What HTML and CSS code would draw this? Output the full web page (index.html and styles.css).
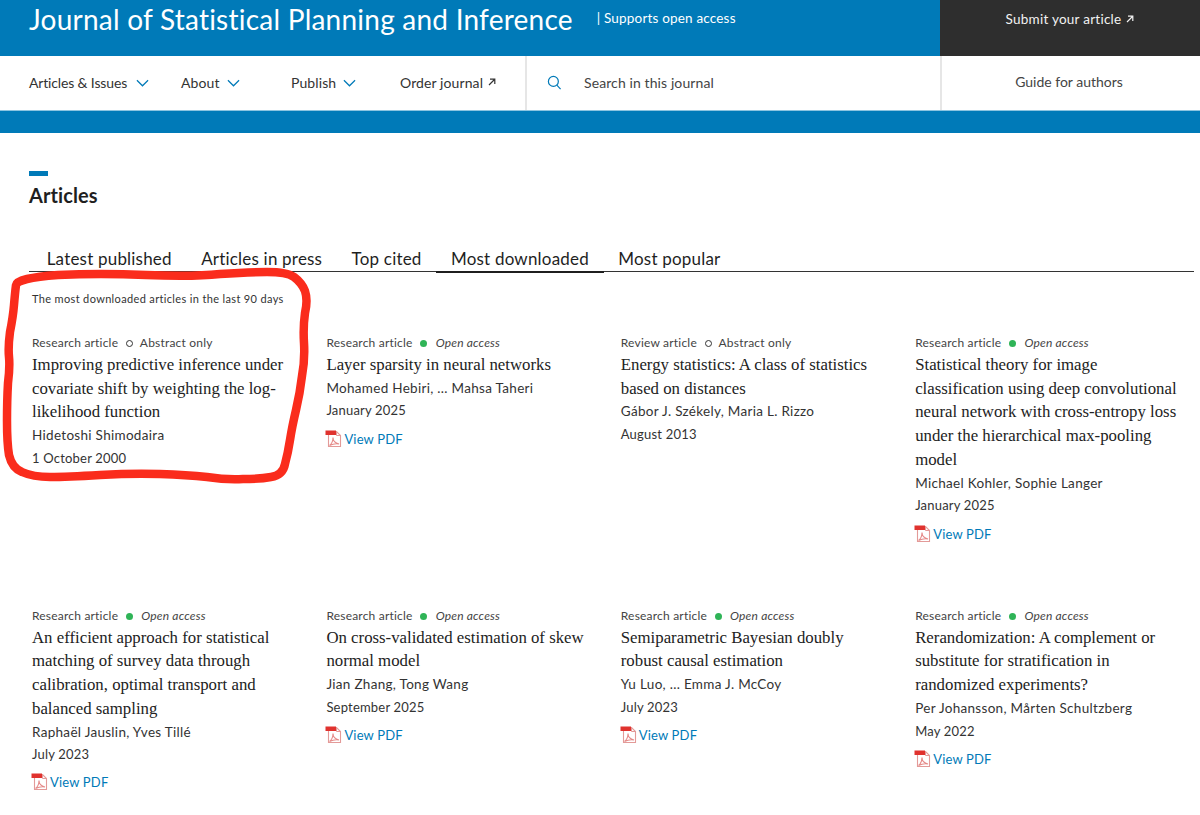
FILE: index.html
```html
<!DOCTYPE html>
<html lang="en">
<head>
<meta charset="utf-8">
<title>Journal of Statistical Planning and Inference</title>
<link rel="stylesheet" href="styles.css">
</head>
<body>
<svg width="0" height="0" class="defs">
  <defs>
    <symbol id="pdf" viewBox="0 0 18 18">
      <path d="M3.500 1.500h8l4 4v11h-12z" fill="#fff" stroke="#e39a98" stroke-width="1.100"/>
      <path d="M11.500 1.500v4h4" fill="none" stroke="#e39a98" stroke-width="1"/>
      <rect x="0.500" y="0.500" width="10.500" height="4.500" fill="#e0322e"/>
      <path d="M4.500 15.500c2-1.500 3.500-4.500 3.500-8 0 3 2 5.500 6 6.500-3-.5-6.500 0-9.500 1.500z" fill="none" stroke="#e58a88" stroke-width="1.100"/>
    </symbol>
    <symbol id="chev" viewBox="0 0 14 8">
      <path d="M1 1l6 6 6-6" fill="none" stroke="#007ab8" stroke-width="1.300"/>
    </symbol>
    <symbol id="ext" viewBox="0 0 8 8">
      <path d="M1 7l5.500-5.500M2 1.200h4.800v4.800" fill="none" stroke="currentColor" stroke-width="1.200"/>
    </symbol>
  </defs>
</svg>

<header class="topbar">
  <div class="brand">
    <h1 class="journal">Journal of Statistical Planning and Inference</h1>
    <span class="oa">| Supports open access</span>
  </div>
  <a class="submit">Submit your article <svg class="ext"><use href="#ext"/></svg></a>
</header>

<nav class="navbar">
  <div class="navlinks">
    <a class="navitem w1">Articles &amp; Issues <svg class="chev"><use href="#chev"/></svg></a>
    <a class="navitem w2">About <svg class="chev"><use href="#chev"/></svg></a>
    <a class="navitem w3">Publish <svg class="chev"><use href="#chev"/></svg></a>
    <a class="navitem">Order journal <svg class="ext"><use href="#ext"/></svg></a>
  </div>
  <div class="search">
    <svg class="searchicon" viewBox="0 0 16 16"><circle cx="6.800" cy="6.800" r="5.300" fill="none" stroke="#007ab8" stroke-width="1.300"/><path d="M10.500 10.800l4 4.200" fill="none" stroke="#007ab8" stroke-width="1.300"/></svg>
    <span>Search in this journal</span>
  </div>
  <a class="guide">Guide for authors</a>
</nav>
<div class="strip"></div>

<main class="content">
  <div class="dash"></div>
  <h2 class="title">Articles</h2>
  <div class="tabs">
    <a class="tab">Latest published</a>
    <a class="tab">Articles in press</a>
    <a class="tab">Top cited</a>
    <a class="tab active">Most downloaded</a>
    <a class="tab">Most popular</a>
  </div>
  <p class="note">The most downloaded articles in the last 90 days</p>

  <div class="grid row1">
    <article class="card">
      <div class="meta">Research article <i class="ring"></i> Abstract only</div>
      <h3>Improving predictive inference under covariate shift by weighting the log-likelihood function</h3>
      <div class="line">Hidetoshi Shimodaira</div>
      <div class="line date">1 October 2000</div>
    </article>
    <article class="card">
      <div class="meta">Research article <i class="dot"></i> <em>Open access</em></div>
      <h3>Layer sparsity in neural networks</h3>
      <div class="line">Mohamed Hebiri, ... Mahsa Taheri</div>
      <div class="line date">January 2025</div>
      <a class="pdf"><svg class="pdficon"><use href="#pdf"/></svg>View PDF</a>
    </article>
    <article class="card">
      <div class="meta">Review article <i class="ring"></i> Abstract only</div>
      <h3>Energy statistics: A class of statistics based on distances</h3>
      <div class="line">Gábor J. Székely, Maria L. Rizzo</div>
      <div class="line date">August 2013</div>
    </article>
    <article class="card">
      <div class="meta">Research article <i class="dot"></i> <em>Open access</em></div>
      <h3>Statistical theory for image classification using deep convolutional neural network with cross-entropy loss under the hierarchical max-pooling model</h3>
      <div class="line">Michael Kohler, Sophie Langer</div>
      <div class="line date">January 2025</div>
      <a class="pdf"><svg class="pdficon"><use href="#pdf"/></svg>View PDF</a>
    </article>
  </div>

  <div class="grid row2">
    <article class="card">
      <div class="meta">Research article <i class="dot"></i> <em>Open access</em></div>
      <h3>An efficient approach for statistical matching of survey data through calibration, optimal transport and balanced sampling</h3>
      <div class="line">Raphaël Jauslin, Yves Tillé</div>
      <div class="line date">July 2023</div>
      <a class="pdf"><svg class="pdficon"><use href="#pdf"/></svg>View PDF</a>
    </article>
    <article class="card">
      <div class="meta">Research article <i class="dot"></i> <em>Open access</em></div>
      <h3>On cross-validated estimation of skew normal model</h3>
      <div class="line">Jian Zhang, Tong Wang</div>
      <div class="line date">September 2025</div>
      <a class="pdf"><svg class="pdficon"><use href="#pdf"/></svg>View PDF</a>
    </article>
    <article class="card">
      <div class="meta">Research article <i class="dot"></i> <em>Open access</em></div>
      <h3>Semiparametric Bayesian doubly robust causal estimation</h3>
      <div class="line">Yu Luo, ... Emma J. McCoy</div>
      <div class="line date">July 2023</div>
      <a class="pdf"><svg class="pdficon"><use href="#pdf"/></svg>View PDF</a>
    </article>
    <article class="card">
      <div class="meta">Research article <i class="dot"></i> <em>Open access</em></div>
      <h3>Rerandomization: A complement or substitute for stratification in randomized experiments?</h3>
      <div class="line">Per Johansson, Mårten Schultzberg</div>
      <div class="line date">May 2022</div>
      <a class="pdf"><svg class="pdficon"><use href="#pdf"/></svg>View PDF</a>
    </article>
  </div>
</main>

<svg class="scribble" viewBox="0 0 320 340" width="320" height="340">
  <path d="M16 125Q17 118 58 115Q100 113 146 115Q193 117 220 114Q247 112 267 112Q287 112 294 117Q302 123 305 131Q308 140 305 153Q303 167 304 183Q305 200 302 216Q300 233 296 250Q292 267 290 280Q288 293 285 304Q283 315 271 317Q260 319 243 319Q227 320 207 317Q187 315 160 314Q133 313 100 315Q67 317 50 317Q33 317 22 312Q12 308 9 295Q7 283 7 261Q7 240 8 223Q10 207 9 197Q8 187 10 172Q13 157 14 145Q15 133 16 125Z" fill="none" stroke="#fa2c1c" stroke-width="8.500" stroke-linejoin="round"/>
</svg>
</body>
</html>
```
FILE: styles.css
```css
* { box-sizing: border-box; }
html, body { margin: 0; padding: 0; }
body {
  width: 1200px;
  height: 815px;
  overflow: hidden;
  position: relative;
  background: #fff;
  color: #1f1f1f;
  font-family: Lato, "Noto Sans", sans-serif;
}
.defs { position: absolute; }

.topbar { display: flex; height: 56px; background: #007ab8; color: #fff; }
.brand { width: 940px; padding: 1px 0 0 29px; display: flex; align-items: flex-start; }
.journal { margin: 0; font-size: 28px; line-height: 36px; font-weight: 400; letter-spacing: 0.23px; white-space: nowrap; }
.oa { margin: 8px 0 0 24px; font-size: 13.500px; line-height: 18px; letter-spacing: 0.18px; }
.submit { width: 260px; background: #2e2e2e; display: flex; align-items: center; justify-content: center; gap: 5px; font-size: 13.500px; padding-bottom: 19px; letter-spacing: 0.25px; color: #f2f2f2; }
.ext { width: 8px; height: 8px; }

.navbar { display: flex; height: 55px; background: #fff; border-bottom: 1px solid #8cc4e0; color: #333; font-size: 14px; letter-spacing: 0.1px; }
.navlinks { width: 527px; padding-left: 29px; display: flex; align-items: center; border-right: 2px solid #e6e6e6; padding-bottom: 2px; }
.navitem { display: flex; align-items: center; gap: 5px; white-space: nowrap; }
.w1 { width: 152px; letter-spacing: -0.15px; gap: 9px; }
.w2 { width: 110px; gap: 7px; }
.w3 { width: 109px; gap: 7px; }
.chev { width: 13px; height: 8px; margin-top: 2px; }
.search { width: 415px; display: flex; align-items: center; gap: 22px; padding: 0 0 2px 20px; border-right: 2px solid #e6e6e6; color: #444; }
.searchicon { width: 15px; height: 15px; }
.guide { width: 258px; display: flex; align-items: center; justify-content: center; color: #444; padding: 0 4px 4px 0; letter-spacing: 0; }
.strip { height: 22px; background: #007ab8; }

.content { padding: 38px 6px 0 29px; }
.dash { width: 19px; height: 5px; background: #007ab8; }
.title { margin: 5px 0 0; font-size: 20px; line-height: 28px; font-weight: 700; color: #1f1f1f; letter-spacing: 0.1px; }
.tabs { display: flex; margin-top: 37px; padding-left: 3px; border-bottom: 1px solid #333; font-size: 17px; line-height: 25px; letter-spacing: 0.2px; }
.tab { padding: 0 14.700px; white-space: nowrap; }
.tab.active { box-shadow: 0 2px 0 #1f1f1f; }
.note { margin: 20px 0 0 3px; font-size: 11px; line-height: 14px; letter-spacing: 0.35px; color: #333; }

.grid { display: grid; grid-template-columns: repeat(4, 294.400px); margin-left: 3px; }
.row1 { margin-top: 30px; height: 273px; }
.card { padding-right: 28px; }
.meta { font-size: 12px; line-height: 14px; letter-spacing: 0.2px; color: #444; margin-bottom: 3px; }
.row2 .meta { margin-bottom: 2.500px; }
.row2 h3 { margin-bottom: 0.500px; }
.meta em { margin-left: 1px; }
.ring, .dot { display: inline-block; width: 7px; height: 7px; border-radius: 50%; margin: 0 4px 0 4.500px; }
.ring { border: 1.300px solid #333; }
.dot { background: #2fb457; }
.card h3 { margin-top: 0; margin-left: 0; margin-right: 0; font-family: "Liberation Serif", serif; font-weight: 400; font-size: 16.800px; line-height: 23.700px; color: #222; }
.row1 h3 { margin-bottom: 0; }
.line { font-size: 13.500px; line-height: 22.500px; letter-spacing: 0.3px; color: #333; }
.line.date { font-size: 13px; letter-spacing: 0.2px; }
.pdf { display: flex; align-items: center; margin-top: 6.500px; font-size: 13px; line-height: 20px; color: #007ab8; letter-spacing: 0.17px; }
.row1 .pdf { margin-top: 7.500px; }
.pdficon { width: 18px; height: 18px; margin-left: -1px; margin-right: 1px; }

.scribble { position: absolute; left: 0; top: 160px; pointer-events: none; }
```
